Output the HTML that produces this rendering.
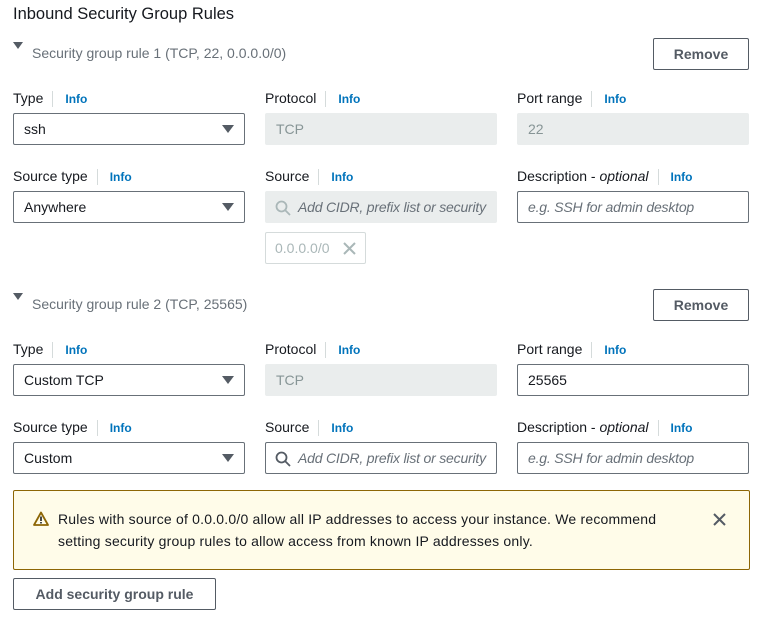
<!DOCTYPE html>
<html><head><style>
*{box-sizing:border-box;margin:0;padding:0}
body{width:764px;height:626px;background:#fff;font-family:"Liberation Sans",sans-serif;color:#16191f;font-size:14px;position:relative;overflow:hidden}
.a{position:absolute;white-space:nowrap}
.lbl{font-size:14px;color:#16191f}
.lbl .sep{display:inline-block;width:1px;height:16px;background:#d5dbdb;vertical-align:middle;margin:0 12px 0 9px}
.lbl b{color:#0073bb;font-size:12px;font-weight:bold}
.inp{position:absolute;width:232px;height:32px;border:1px solid #687078;border-radius:2px;padding:0 10px;line-height:30px;font-size:14px}
.dis{background:#eaeded;border-color:#eaeded;color:#879596}
.ph{color:#687078;font-style:italic;letter-spacing:-0.2px}
.caret{position:absolute;right:10px;top:11px;width:0;height:0;border-left:6px solid transparent;border-right:6px solid transparent;border-top:8px solid #545b64}
.btn{position:absolute;border:1px solid #545b64;border-radius:2px;background:#fff;font-weight:bold;color:#545b64;text-align:center;font-size:14px}
.tri{position:absolute;width:0;height:0;border-left:5px solid transparent;border-right:5px solid transparent;border-top:7px solid #545b64}
.hdr{color:#687078;font-size:14px}
</style></head><body>
<div class="a" style="left:13px;top:5px;font-size:16.5px">Inbound Security Group Rules</div>

<div class="tri" style="left:13px;top:42px"></div>
<div class="a hdr" style="left:32px;top:45px">Security group rule 1 (TCP, 22, 0.0.0.0/0)</div>
<div class="btn" style="left:653px;top:38px;width:96px;height:32px;line-height:30px">Remove</div>

<div class="a lbl" style="left:13px;top:90px">Type<span class="sep"></span><b>Info</b></div>
<div class="a lbl" style="left:265px;top:90px">Protocol<span class="sep"></span><b>Info</b></div>
<div class="a lbl" style="left:517px;top:90px">Port range<span class="sep"></span><b>Info</b></div>
<div class="inp" style="left:13px;top:113px">ssh<div class="caret"></div></div>
<div class="inp dis" style="left:265px;top:113px">TCP</div>
<div class="inp dis" style="left:517px;top:113px">22</div>

<div class="a lbl" style="left:13px;top:168px">Source type<span class="sep"></span><b>Info</b></div>
<div class="a lbl" style="left:265px;top:168px">Source<span class="sep"></span><b>Info</b></div>
<div class="a lbl" style="left:517px;top:168px">Description - <i>optional</i><span class="sep"></span><b>Info</b></div>
<div class="inp" style="left:13px;top:191px">Anywhere<div class="caret"></div></div>
<div class="inp dis" style="left:265px;top:191px;padding-left:32px;overflow:hidden"><svg style="position:absolute;left:9px;top:8px" width="16" height="16" viewBox="0 0 16 16"><circle cx="6.5" cy="6.5" r="5" fill="none" stroke="#aab7b8" stroke-width="1.8"/><path d="M10 10l5 5" stroke="#aab7b8" stroke-width="1.8"/></svg><span class="ph">Add CIDR, prefix list or security</span></div>
<div class="inp" style="left:517px;top:191px"><span class="ph">e.g. SSH for admin desktop</span></div>
<div class="a" style="left:265px;top:232px;width:101px;height:32px;border:1px solid #d5dbdb;border-radius:2px;color:#aab7b8;line-height:30px;padding-left:9px">0.0.0.0/0<svg style="position:absolute;left:77px;top:9px" width="13" height="13" viewBox="0 0 13 13"><path d="M1 1l11 11M12 1L1 12" stroke="#aab7b8" stroke-width="2"/></svg></div>

<div class="tri" style="left:13px;top:293px"></div>
<div class="a hdr" style="left:32px;top:296px">Security group rule 2 (TCP, 25565)</div>
<div class="btn" style="left:653px;top:289px;width:96px;height:32px;line-height:30px">Remove</div>

<div class="a lbl" style="left:13px;top:341px">Type<span class="sep"></span><b>Info</b></div>
<div class="a lbl" style="left:265px;top:341px">Protocol<span class="sep"></span><b>Info</b></div>
<div class="a lbl" style="left:517px;top:341px">Port range<span class="sep"></span><b>Info</b></div>
<div class="inp" style="left:13px;top:364px">Custom TCP<div class="caret"></div></div>
<div class="inp dis" style="left:265px;top:364px">TCP</div>
<div class="inp" style="left:517px;top:364px">25565</div>

<div class="a lbl" style="left:13px;top:419px">Source type<span class="sep"></span><b>Info</b></div>
<div class="a lbl" style="left:265px;top:419px">Source<span class="sep"></span><b>Info</b></div>
<div class="a lbl" style="left:517px;top:419px">Description - <i>optional</i><span class="sep"></span><b>Info</b></div>
<div class="inp" style="left:13px;top:442px">Custom<div class="caret"></div></div>
<div class="inp" style="left:265px;top:442px;padding-left:32px;overflow:hidden"><svg style="position:absolute;left:9px;top:8px" width="16" height="16" viewBox="0 0 16 16"><circle cx="6.5" cy="6.5" r="5" fill="none" stroke="#545b64" stroke-width="1.8"/><path d="M10 10l5 5" stroke="#545b64" stroke-width="1.8"/></svg><span class="ph">Add CIDR, prefix list or security</span></div>
<div class="inp" style="left:517px;top:442px"><span class="ph">e.g. SSH for admin desktop</span></div>

<div class="a" style="left:13px;top:490px;width:737px;height:80px;background:#fffce9;border:1px solid #8d6605;border-radius:2px"></div>
<svg class="a" style="left:33px;top:511px" width="16" height="15" viewBox="0 0 16 15"><path d="M8 1.5L15 14H1z" fill="none" stroke="#8d6605" stroke-width="1.8" stroke-linejoin="round"/><path d="M8 5.5v4.5M8 11v1.5" stroke="#16191f" stroke-width="1.6"/></svg>
<div class="a" style="left:58px;top:508px;line-height:22px;font-size:14px;letter-spacing:0.2px">Rules with source of 0.0.0.0/0 allow all IP addresses to access your instance. We recommend<br>setting security group rules to allow access from known IP addresses only.</div>
<svg class="a" style="left:713px;top:513px" width="13" height="13" viewBox="0 0 13 13"><path d="M1 1l11 11M12 1L1 12" stroke="#545b64" stroke-width="2"/></svg>

<div class="btn" style="left:13px;top:578px;width:203px;height:32px;line-height:30px">Add security group rule</div>
</body></html>
